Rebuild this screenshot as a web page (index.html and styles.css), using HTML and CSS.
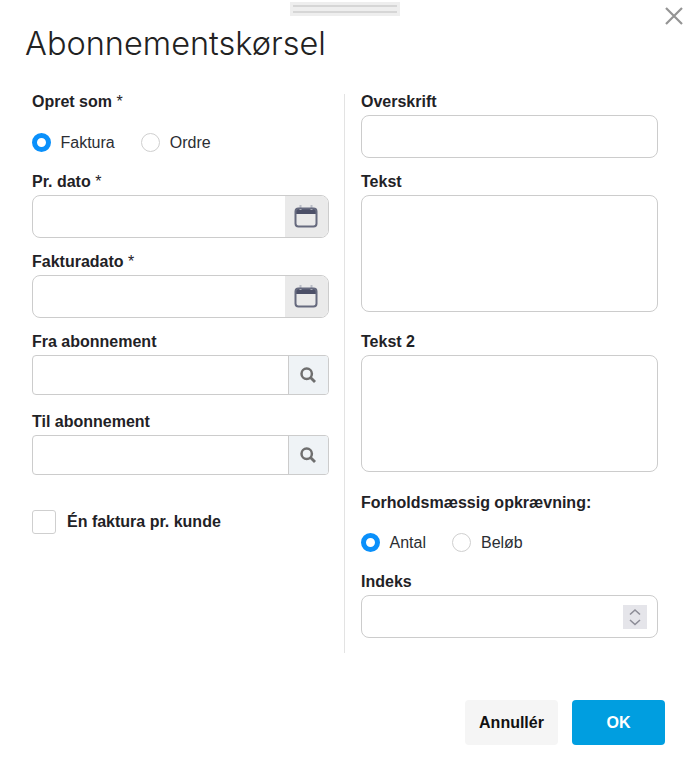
FILE: index.html
```html
<!DOCTYPE html>
<html lang="da">
<head>
<meta charset="utf-8">
<title>Abonnementskørsel</title>
<link rel="stylesheet" href="styles.css">
</head>
<body>
<div class="modal">
  <div class="topbar">
    <div class="handle"><span></span><span></span></div>
    <button class="close" aria-label="Luk">
      <svg width="18" height="18" viewBox="0 0 18 18"><path d="M1 1L17 17M17 1L1 17" stroke="#949494" stroke-width="2.2" fill="none"/></svg>
    </button>
  </div>
  <h1 class="title">Abonnementskørsel</h1>
  <div class="form">
    <div class="col">
      <div class="label">Opret som <span class="req">*</span></div>
      <div class="radios">
        <label class="radio"><input type="radio" name="a" checked><span>Faktura</span></label>
        <label class="radio"><input type="radio" name="a"><span>Ordre</span></label>
      </div>
      <div class="label">Pr. dato <span class="req">*</span></div>
      <div class="group tall gap14">
        <input type="text">
        <span class="addon cal">
          <svg width="24" height="23" viewBox="0 0 24 23"><path d="M6.5 0v4M17.5 0v4" stroke="#b9bcc6" stroke-width="2"/><path d="M1.2 6a3 3 0 0 1 3-3H5.500v2h2V3h9v2h2V3H20a3 3 0 0 1 3 3v3H1.2z" fill="#4c5068"/><rect x="1.5" y="3.500" width="21" height="18" rx="3" fill="none" stroke="#666a7e" stroke-width="2"/></svg>
        </span>
      </div>
      <div class="label">Fakturadato <span class="req">*</span></div>
      <div class="group tall gap14">
        <input type="text">
        <span class="addon cal">
          <svg width="24" height="23" viewBox="0 0 24 23"><path d="M6.5 0v4M17.5 0v4" stroke="#b9bcc6" stroke-width="2"/><path d="M1.2 6a3 3 0 0 1 3-3H5.500v2h2V3h9v2h2V3H20a3 3 0 0 1 3 3v3H1.2z" fill="#4c5068"/><rect x="1.5" y="3.500" width="21" height="18" rx="3" fill="none" stroke="#666a7e" stroke-width="2"/></svg>
        </span>
      </div>
      <div class="label">Fra abonnement</div>
      <div class="group short gap17">
        <input type="text">
        <span class="addon search">
          <svg width="16" height="16" viewBox="0 0 16 16"><circle cx="6.700" cy="6.700" r="5.200" fill="none" stroke="#6f6f6f" stroke-width="2.500"/><path d="M10.500 10.500L15 15" stroke="#6f6f6f" stroke-width="2.800"/></svg>
        </span>
      </div>
      <div class="label">Til abonnement</div>
      <div class="group short">
        <input type="text">
        <span class="addon search">
          <svg width="16" height="16" viewBox="0 0 16 16"><circle cx="6.700" cy="6.700" r="5.200" fill="none" stroke="#6f6f6f" stroke-width="2.500"/><path d="M10.500 10.500L15 15" stroke="#6f6f6f" stroke-width="2.800"/></svg>
        </span>
      </div>
      <label class="check"><input type="checkbox"><span>Én faktura pr. kunde</span></label>
    </div>
    <div class="divider"></div>
    <div class="col">
      <div class="label">Overskrift</div>
      <div class="group tall gap14"><input type="text"></div>
      <div class="label">Tekst</div>
      <textarea class="area"></textarea>
      <div class="label">Tekst 2</div>
      <textarea class="area area-last"></textarea>
      <div class="label">Forholdsmæssig opkrævning:</div>
      <div class="radios radios-tight">
        <label class="radio"><input type="radio" name="b" checked><span>Antal</span></label>
        <label class="radio"><input type="radio" name="b"><span>Beløb</span></label>
      </div>
      <div class="label">Indeks</div>
      <div class="group tall">
        <input type="text">
        <span class="stepper">
          <svg width="24" height="24" viewBox="0 0 24 24"><path d="M7 9.500L12 5l5 4.500M7 15l5 4.500 5-4.500" fill="none" stroke="#8d8d97" stroke-width="1.600"/></svg>
        </span>
      </div>
    </div>
  </div>
  <div class="footer">
    <button class="btn cancel">Annullér</button>
    <button class="btn ok">OK</button>
  </div>
</div>
</body>
</html>
```
FILE: styles.css
```css
* { box-sizing: border-box; }
html, body { margin: 0; padding: 0; background: #fff; }
body { font-family: "Liberation Sans", Arial, sans-serif; color: #212529; }
.modal { width: 691px; height: 770px; overflow: hidden; }

.topbar { display: flex; justify-content: space-between; padding: 2px 8px 0 290px; height: 24px; }
.handle { width: 110px; height: 14px; background: #eeeeee; display: flex; flex-direction: column; gap: 4px; padding: 3px 3px 0; }
.handle span { display: block; height: 2px; background: #d6d6d6; }
.close { border: 0; background: none; padding: 0; margin-top: 5px; width: 18px; height: 18px; display: block; }
.close svg { display: block; }

.title { margin: 0 0 24px 25px; font-family: Inter, Lato, "Liberation Sans", sans-serif; font-weight: 300; font-size: 32.5px; line-height: 40px; color: #222; height: 44px; }

.form { display: flex; padding-left: 32px; height: 561px; }
.col { width: 297px; }
.divider { width: 1px; margin: 2px 16px 0 15px; background: #e3e3e3; flex: none; }

.label { font-size: 16px; font-weight: 700; line-height: 20px; margin-bottom: 3px; color: #1f2226; }
.req { font-weight: 400; }

.radios { display: flex; gap: 26.5px; margin-top: 21px; margin-bottom: 20px; height: 19px; }
.radios-tight { margin-top: 20px; }
.radio { display: flex; align-items: center; gap: 9.5px; font-size: 16px; color: #2b2e33; }
.radio input { appearance: none; margin: 0; width: 19px; height: 19px; border-radius: 50%; border: 1px solid #cfcfcf; background: #fff; }
.radio input:checked { border: 5.5px solid #0a90fb; }

.group { display: flex; border: 1px solid #cccccc; border-radius: 8px; overflow: hidden; background: #fff; align-items: stretch; }
.group input { flex: 1; min-width: 0; border: 0; outline: 0; padding: 0 10px; background: transparent; }
.tall { height: 43px; }
.short { height: 40px; border-radius: 4px; }
.gap14 { margin-bottom: 14px; }
.gap17 { margin-bottom: 17px; }

.addon { flex: none; display: flex; align-items: center; justify-content: center; }
.cal { width: 44px; padding-right: 3px; background: #eaeaea; margin: -1px -1px -1px 0; }
.search { width: 40px; padding-right: 1px; background: #eff3f6; border-left: 1px solid #cccccc; }

.stepper { flex: none; align-self: center; width: 24px; height: 24px; margin-right: 10px; background: #e5e5ea; }
.stepper svg { display: block; }

.area { display: block; width: 297px; height: 117px; border: 1px solid #cccccc; border-radius: 8px; resize: none; outline: 0; margin: 0 0 20px; }
.area-last { margin-bottom: 21px; }

.check { display: flex; align-items: center; gap: 11px; margin-top: 35px; font-size: 16px; font-weight: 700; color: #1f2226; }
.check input { appearance: none; margin: 0; width: 24px; height: 24px; border: 1px solid #cfcfcf; border-radius: 3px; background: #fff; }

.footer { display: flex; justify-content: flex-end; gap: 14px; margin-top: 47px; padding-right: 26px; }
.btn { width: 93px; height: 45px; border: 0; border-radius: 4px; font-family: "Liberation Sans", Arial, sans-serif; font-size: 16px; font-weight: 700; }
.cancel { background: #f5f5f5; color: #111; }
.ok { background: #009ee0; color: #fff; }
```
